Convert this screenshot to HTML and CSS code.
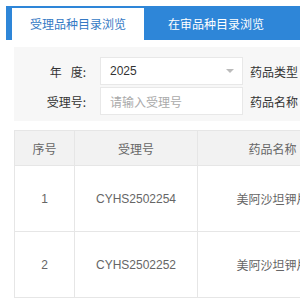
FILE: index.html
```html
<!DOCTYPE html>
<html lang="zh">
<head>
<meta charset="utf-8">
<link rel="stylesheet" href="styles.css">
</head>
<body>
<div class="page">
  <div class="tabs">
    <div class="tab active">受理品种目录浏览</div>
    <div class="tab second">在审品种目录浏览</div>
  </div>
  <div class="content">
    <div class="filters">
      <div class="frow">
        <label class="flabel">年<span class="gap"></span>度:</label>
        <div class="field select">
          <span>2025</span>
          <span class="caret"></span>
        </div>
        <label class="flabel2">药品类型</label>
      </div>
      <div class="frow">
        <label class="flabel">受理号:</label>
        <div class="field"><span class="ph">请输入受理号</span></div>
        <label class="flabel2">药品名称</label>
      </div>
    </div>
    <div class="table">
      <div class="tr th">
        <div class="c c1">序号</div>
        <div class="c c2">受理号</div>
        <div class="c c3">药品名称</div>
      </div>
      <div class="tr">
        <div class="c c1">1</div>
        <div class="c c2">CYHS2502254</div>
        <div class="c c3">美阿沙坦钾片</div>
      </div>
      <div class="tr">
        <div class="c c1">2</div>
        <div class="c c2">CYHS2502252</div>
        <div class="c c3">美阿沙坦钾片</div>
      </div>
    </div>
  </div>
</div>
</body>
</html>
```

FILE: styles.css
```css
html, body {
  margin: 0;
  padding: 0;
  background: #fff;
  overflow: hidden;
}
body {
  width: 300px;
  height: 300px;
  font-family: "Liberation Sans", "Noto Sans CJK SC", sans-serif;
  font-size: 12px;
  color: #333;
}
.page {
  padding: 6px 0 0 6px;
  width: 294px;
  height: 294px;
  overflow: hidden;
}
.tabs {
  display: flex;
  background: #2e86d8;
  height: 34px;
  padding: 2px 0 0 6px;
  box-sizing: border-box;
}
.tab {
  flex: none;
  padding: 0 18px;
  height: 32px;
  line-height: 32px;
  white-space: nowrap;
  color: #fff;
  font-family: "Noto Sans CJK SC", sans-serif;
}
.tab.active {
  background: #fff;
  color: #3479c4;
}
.tab.second {
  margin-left: 6px;
}
.content {
  padding: 7px 0 0 8px;
}
.filters {
  background: #f7f7f7;
  padding: 10px 0 6px 0;
  display: flex;
  flex-direction: column;
  gap: 2px;
}
.frow {
  display: flex;
  align-items: center;
  height: 28px;
}
.flabel {
  flex: none;
  width: 72px;
  text-align: right;
  padding-right: 14px;
  font-family: "Noto Sans CJK SC", sans-serif;
  color: #333;
  display: flex;
  justify-content: flex-end;
}
.gap {
  display: inline-block;
  width: 9px;
}
.field {
  flex: none;
  width: 143px;
  height: 28px;
  box-sizing: border-box;
  border: 1px solid #e8e8e8;
  background: #fff;
  display: flex;
  align-items: center;
  padding-left: 9px;
  color: #333;
}
.select {
  justify-content: space-between;
  padding-right: 8px;
}
.caret {
  width: 0;
  height: 0;
  border-left: 4px solid transparent;
  border-right: 4px solid transparent;
  border-top: 4px solid #bbb;
}
.ph {
  color: #aaa;
  font-family: "Noto Sans CJK SC", sans-serif;
}
.flabel2 {
  flex: none;
  margin-left: 7px;
  white-space: nowrap;
  font-family: "Noto Sans CJK SC", sans-serif;
  color: #333;
}
.table {
  margin-top: 9px;
  border-left: 1px solid #e6e6e6;
  border-top: 1px solid #e6e6e6;
}
.tr {
  display: flex;
  height: 65px;
  border-bottom: 1px solid #e6e6e6;
  color: #666;
}
.tr.th {
  height: 34px;
  background: #f2f2f2;
}
.c {
  flex: none;
  display: flex;
  align-items: center;
  justify-content: center;
  white-space: nowrap;
  border-right: 1px solid #e6e6e6;
  box-sizing: border-box;
}
.th .c, .c3 {
  font-family: "Noto Sans CJK SC", sans-serif;
}
.c1 { width: 60px; }
.c2 { width: 123px; }
.c3 { width: 150px; }
```
